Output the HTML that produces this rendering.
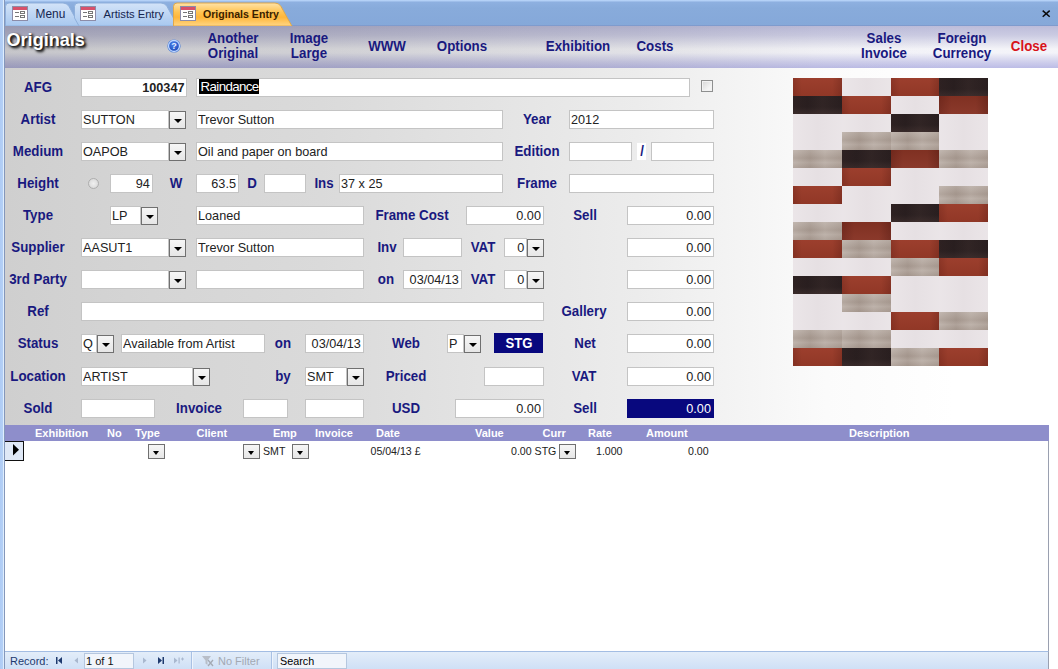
<!DOCTYPE html><html><head><meta charset="utf-8"><title>Originals Entry</title><style>
*{box-sizing:border-box;margin:0;padding:0}
html,body{width:1058px;height:669px;overflow:hidden;background:#fff}
body{position:relative;font-family:"Liberation Sans",sans-serif;font-size:12px;color:#1e1e1e}
.a{position:absolute}
.f{position:absolute;background:#fff;border:1px solid #c4c4c4;height:19px;line-height:17px;font-size:13.33px;padding:0 2px 0 1px;white-space:nowrap;overflow:hidden;color:#222}
.r{text-align:right}
.t{display:inline-block;transform:scaleX(.95);transform-origin:0 50%}
.r .t{transform-origin:100% 50%}
.l{position:absolute;font-weight:bold;font-size:14.5px;transform:scaleX(.918);color:#19197f;white-space:nowrap;text-align:center;line-height:16px}
.h{position:absolute;font-weight:bold;font-size:14.5px;transform:scaleX(.918);color:#19197f;white-space:nowrap;text-align:center;line-height:15.700px}
.b{position:absolute;width:17px;height:18px;border:1px solid #707070;background:linear-gradient(#f6f6f6,#e6e6e6)}
.b:after{content:"";position:absolute;left:3.500px;top:6.500px;border-left:4px solid transparent;border-right:4px solid transparent;border-top:4px solid #000}
.sh{position:absolute;font-weight:bold;font-size:11px;color:#fff;white-space:nowrap;line-height:14px;top:425.500px}
.st{position:absolute;font-size:10.600px;color:#222;white-space:nowrap;line-height:14px;top:443.500px}
.sb{position:absolute;width:17px;height:15px;border:1px solid #707070;background:linear-gradient(#f6f6f6,#e6e6e6)}
.sb:after{content:"";position:absolute;left:4px;top:6px;border-left:3.5px solid transparent;border-right:3.5px solid transparent;border-top:4px solid #000}
.n{position:absolute;font-size:11px;color:#1e3a6e;white-space:nowrap;line-height:14px;top:654px}
</style></head><body>
<div class="a" style="left:0;top:0;width:1058px;height:26px;background:linear-gradient(#b9d5f9 0,#b0cdf4 1px,#8eb0e0 2px,#88abdb 8px,#85a8d9 100%)"></div>
<div class="a" style="left:0;top:25px;width:1058px;height:1px;background:#7f9bcd"></div>
<div class="a" style="left:0;top:0;width:5px;height:669px;background:linear-gradient(to right,#aecbf5 0,#b4d0f6 2.700px,#dfeefe 3px,#dfeefe 4px,#8497bb 4px)"></div>
<div class="a" style="left:5px;top:26px;width:1053px;height:626px;background:linear-gradient(to right,#cfcfcf 0,#d5d5d5 14%,#dadada 30%,#ececec 60%,#fbfbfb 78%,#fff 90%)"></div>
<div class="a" style="left:5px;top:26px;width:1053px;height:42px;background:linear-gradient(#bcbcda 0,#cbcbe2 22%,#f4f4f8 55%,#f3f3f9 64%,#d0d0ec 85%,#bcbce6 100%),linear-gradient(to right,#cfcfcf 0,#d5d5d5 14%,#dadada 30%,#ececec 60%,#fbfbfb 78%,#fff 90%);background-blend-mode:multiply"></div>
<svg class="a" style="left:0;top:0" width="320" height="26" viewBox="0 0 320 26">
<defs>
<linearGradient id="ti" x1="0" y1="0" x2="0" y2="1"><stop offset="0" stop-color="#d3e3f8"/><stop offset="1" stop-color="#a8c8ef"/></linearGradient>
<linearGradient id="ta" x1="0" y1="0" x2="0" y2="1"><stop offset="0" stop-color="#ffe3a8"/><stop offset=".4" stop-color="#ffc352"/><stop offset=".62" stop-color="#ffb63a"/><stop offset="1" stop-color="#ffd685"/></linearGradient>
</defs>
<path d="M5.5 26 V6.500 Q5.5 3 9 3 H63 Q67 3 69 6.500 L79 24.5 L80 26 Z" fill="url(#ti)" stroke="#8fb0dc" stroke-width="1"/>
<path d="M74.500 18 V6.500 Q74.500 3 78 3 H161 Q165 3 167 6.500 L177 24.500 L178 26 H79 Z" fill="url(#ti)" stroke="#8fb0dc" stroke-width="1"/>
<path d="M173.500 26 V6.500 Q173.500 3 177 3 H275 Q279 3 281 6.500 L291 24.500 L292 26 Z" fill="url(#ta)" stroke="#e0a84a" stroke-width="1"/>
</svg>
<svg class="a" style="left:12px;top:6px" width="16" height="15" viewBox="0 0 16 15"><rect x=".5" y=".5" width="15" height="14" fill="#fff" stroke="#8c8ca8"/><rect x="1" y="1" width="14" height="3" fill="#d8506a"/><rect x="3" y="6" width="4" height="1" fill="#777"/><rect x="3" y="10" width="4" height="1" fill="#777"/><rect x="8.500" y="5.500" width="4" height="2" fill="none" stroke="#777" stroke-width="1"/><rect x="8.500" y="9.500" width="4" height="2" fill="none" stroke="#777" stroke-width="1"/></svg>
<svg class="a" style="left:80px;top:6px" width="16" height="15" viewBox="0 0 16 15"><rect x=".5" y=".5" width="15" height="14" fill="#fff" stroke="#8c8ca8"/><rect x="1" y="1" width="14" height="3" fill="#d8506a"/><rect x="3" y="6" width="4" height="1" fill="#777"/><rect x="3" y="10" width="4" height="1" fill="#777"/><rect x="8.500" y="5.500" width="4" height="2" fill="none" stroke="#777" stroke-width="1"/><rect x="8.500" y="9.500" width="4" height="2" fill="none" stroke="#777" stroke-width="1"/></svg>
<svg class="a" style="left:179.5px;top:6px" width="16" height="15" viewBox="0 0 16 15"><rect x=".5" y=".5" width="15" height="14" fill="#fff" stroke="#8c8ca8"/><rect x="1" y="1" width="14" height="3" fill="#d8506a"/><rect x="3" y="6" width="4" height="1" fill="#777"/><rect x="3" y="10" width="4" height="1" fill="#777"/><rect x="8.500" y="5.500" width="4" height="2" fill="none" stroke="#777" stroke-width="1"/><rect x="8.500" y="9.500" width="4" height="2" fill="none" stroke="#777" stroke-width="1"/></svg>
<div class="a" style="left:35.500px;top:6.500px;font-size:11.900px;line-height:14px;color:#15254f">Menu</div>
<div class="a" style="left:103.500px;top:6.500px;font-size:11.200px;line-height:14px;color:#15254f">Artists Entry</div>
<div class="a" style="left:203px;top:6.500px;font-size:10.600px;line-height:14px;color:#3a1e00;font-weight:bold">Originals Entry</div>
<svg class="a" style="left:1042px;top:10px" width="9" height="8" viewBox="0 0 9 8"><path d="M.7 .6 L7.700 6.800 M7.700 .6 L.7 6.800" stroke="#0a0a0a" stroke-width="1.500"/></svg>
<div class="a" style="left:6.500px;top:28.500px;font-size:18.100px;font-weight:bold;color:#fff;line-height:22px;text-shadow:2px 2px 3px #000,1px 1px 2px #333">Originals</div>
<svg class="a" style="left:167px;top:39px" width="14" height="14" viewBox="0 0 14 14"><defs><radialGradient id="hg" cx=".45" cy=".35" r=".75"><stop offset="0" stop-color="#4a84ee"/><stop offset="1" stop-color="#153fae"/></radialGradient></defs><circle cx="7" cy="7" r="6.600" fill="#4f7fd6"/><circle cx="7" cy="7" r="5.500" fill="url(#hg)" stroke="#bcd6ff" stroke-width="1.300"/><text x="7" y="10.200" font-family="Liberation Sans" font-weight="bold" font-size="9" fill="#e6efff" text-anchor="middle">?</text></svg>
<div class="h" style="left:172.5px;width:120px;top:30.6px;color:#19197f">Another<br>Original</div>
<div class="h" style="left:248.5px;width:120px;top:30.6px;color:#19197f">Image<br>Large</div>
<div class="h" style="left:326.7px;width:120px;top:38.7px;color:#19197f">WWW</div>
<div class="h" style="left:402.3px;width:120px;top:38.7px;color:#19197f">Options</div>
<div class="h" style="left:517.7px;width:120px;top:38.7px;color:#19197f">Exhibition</div>
<div class="h" style="left:595.3px;width:120px;top:38.7px;color:#19197f">Costs</div>
<div class="h" style="left:824px;width:120px;top:30.6px;color:#19197f">Sales<br>Invoice</div>
<div class="h" style="left:901.5px;width:120px;top:30.6px;color:#19197f">Foreign<br>Currency</div>
<div class="h" style="left:969.3px;width:120px;top:38.7px;color:#d8121a">Close</div>
<div class="l" style="left:-12.200000000000003px;width:100px;top:78.7px">AFG</div>
<div class="l" style="left:-12.200000000000003px;width:100px;top:110.7px">Artist</div>
<div class="l" style="left:-12.200000000000003px;width:100px;top:142.7px">Medium</div>
<div class="l" style="left:-12.200000000000003px;width:100px;top:174.7px">Height</div>
<div class="l" style="left:-12.200000000000003px;width:100px;top:206.7px">Type</div>
<div class="l" style="left:-12.200000000000003px;width:100px;top:238.7px">Supplier</div>
<div class="l" style="left:-12.200000000000003px;width:100px;top:270.7px">3rd Party</div>
<div class="l" style="left:-12.200000000000003px;width:100px;top:302.7px">Ref</div>
<div class="l" style="left:-12.200000000000003px;width:100px;top:334.7px">Status</div>
<div class="l" style="left:-12.200000000000003px;width:100px;top:367.7px">Location</div>
<div class="l" style="left:-12.200000000000003px;width:100px;top:399.7px">Sold</div>
<div class="f r" style="left:81px;width:106px;top:78px"><span class="t"><b>100347</b></span></div>
<div class="f " style="left:196px;width:494px;top:78px"><span style="background:#000;color:#fff;display:inline-block;height:15px;line-height:16px;margin-top:0;padding:0 0 0 1.500px;margin-left:1px;font-size:13.330px;vertical-align:top;letter-spacing:-.62px">Raindance</span></div>
<div class="a" style="left:701px;top:80px;width:12px;height:12px;border:1px solid #8e8f8f;background:linear-gradient(135deg,#d6d6d6,#f4f4f4 70%);box-shadow:inset 0 0 0 1px #f2f2f2"></div>
<div class="f " style="left:81px;width:88px;top:110px"><span class="t">SUTTON</span></div>
<div class="b" style="left:169px;top:111px"></div>
<div class="f " style="left:196px;width:307px;top:110px"><span class="t">Trevor Sutton</span></div>
<div class="l" style="left:486.5px;width:100px;top:110.7px">Year</div>
<div class="f " style="left:569px;width:145px;top:110px"><span class="t">2012</span></div>
<div class="f " style="left:81px;width:88px;top:142px"><span class="t">OAPOB</span></div>
<div class="b" style="left:169px;top:143px"></div>
<div class="f " style="left:196px;width:307px;top:142px"><span class="t">Oil and paper on board</span></div>
<div class="l" style="left:486.5px;width:100px;top:142.7px">Edition</div>
<div class="f " style="left:569px;width:63px;top:142px"></div>
<div class="a" style="left:637px;top:143px;width:9px;height:17px;background:#fff"></div>
<div class="l" style="left:591.7px;width:100px;top:142.7px">/</div>
<div class="f " style="left:651px;width:63px;top:142px"></div>
<div class="a" style="left:88px;top:178px;width:11px;height:11px;border-radius:50%;border:1px solid #aeaeae;background:radial-gradient(#f0f0f0,#d4d4d4)"></div>
<div class="f r" style="left:110px;width:43px;top:174px"><span class="t">94</span></div>
<div class="l" style="left:126px;width:100px;top:174.7px">W</div>
<div class="f r" style="left:196px;width:43px;top:174px"><span class="t">63.5</span></div>
<div class="l" style="left:201.5px;width:100px;top:174.7px">D</div>
<div class="f " style="left:264px;width:42px;top:174px"></div>
<div class="l" style="left:273.5px;width:100px;top:174.7px">Ins</div>
<div class="f " style="left:339px;width:164px;top:174px"><span class="t">37 x 25</span></div>
<div class="l" style="left:486.5px;width:100px;top:174.7px">Frame</div>
<div class="f " style="left:569px;width:145px;top:174px"></div>
<div class="f " style="left:110px;width:31px;top:206px"><span class="t">LP</span></div>
<div class="b" style="left:141px;top:207px"></div>
<div class="f " style="left:196px;width:168px;top:206px"><span class="t">Loaned</span></div>
<div class="l" style="left:362px;width:100px;top:206.7px">Frame Cost</div>
<div class="f r" style="left:466px;width:78px;top:206px"><span class="t">0.00</span></div>
<div class="l" style="left:535.3px;width:100px;top:206.7px">Sell</div>
<div class="f r" style="left:627px;width:87px;top:206px"><span class="t">0.00</span></div>
<div class="f " style="left:81px;width:88px;top:238px"><span class="t">AASUT1</span></div>
<div class="b" style="left:169px;top:239px"></div>
<div class="f " style="left:196px;width:168px;top:238px"><span class="t">Trevor Sutton</span></div>
<div class="l" style="left:337px;width:100px;top:238.7px">Inv</div>
<div class="f " style="left:403px;width:59px;top:238px"></div>
<div class="l" style="left:432.7px;width:100px;top:238.7px">VAT</div>
<div class="f r" style="left:504px;width:23px;top:238px"><span class="t">0</span></div>
<div class="b" style="left:527px;top:239px"></div>
<div class="f r" style="left:627px;width:87px;top:238px"><span class="t">0.00</span></div>
<div class="f " style="left:81px;width:88px;top:270px"></div>
<div class="b" style="left:169px;top:271px"></div>
<div class="f " style="left:196px;width:168px;top:270px"></div>
<div class="l" style="left:336px;width:100px;top:270.7px">on</div>
<div class="f r" style="left:403px;width:59px;top:270px"><span class="t">03/04/13</span></div>
<div class="l" style="left:432.7px;width:100px;top:270.7px">VAT</div>
<div class="f r" style="left:504px;width:23px;top:270px"><span class="t">0</span></div>
<div class="b" style="left:527px;top:271px"></div>
<div class="f r" style="left:627px;width:87px;top:270px"><span class="t">0.00</span></div>
<div class="f " style="left:81px;width:463px;top:302px"></div>
<div class="l" style="left:533.7px;width:100px;top:302.7px">Gallery</div>
<div class="f r" style="left:627px;width:87px;top:302px"><span class="t">0.00</span></div>
<div class="f " style="left:81px;width:16px;top:334px"><span class="t">Q</span></div>
<div class="b" style="left:97px;top:335px"></div>
<div class="f " style="left:121px;width:144px;top:334px"><span class="t">Available from Artist</span></div>
<div class="l" style="left:233px;width:100px;top:334.7px">on</div>
<div class="f r" style="left:305px;width:59px;top:334px"><span class="t">03/04/13</span></div>
<div class="l" style="left:355.5px;width:100px;top:334.7px">Web</div>
<div class="f " style="left:447px;width:17px;top:334px"><span class="t">P</span></div>
<div class="b" style="left:464px;top:335px"></div>
<div class="a" style="left:494px;top:333px;width:49px;height:20px;background:#08087e;color:#fff;font-weight:bold;font-size:14.500px;line-height:20px;text-align:center"><span style="display:inline-block;transform:scaleX(.905)">STG</span></div>
<div class="l" style="left:534.7px;width:100px;top:334.7px">Net</div>
<div class="f r" style="left:627px;width:87px;top:334px"><span class="t">0.00</span></div>
<div class="f " style="left:81px;width:112px;top:367px"><span class="t">ARTIST</span></div>
<div class="b" style="left:193px;top:368px"></div>
<div class="l" style="left:233px;width:100px;top:367.7px">by</div>
<div class="f " style="left:305px;width:42px;top:367px"><span class="t">SMT</span></div>
<div class="b" style="left:347px;top:368px"></div>
<div class="l" style="left:355.5px;width:100px;top:367.7px">Priced</div>
<div class="f " style="left:484px;width:60px;top:367px"></div>
<div class="l" style="left:533.7px;width:100px;top:367.7px">VAT</div>
<div class="f r" style="left:627px;width:87px;top:367px"><span class="t">0.00</span></div>
<div class="f " style="left:81px;width:74px;top:399px"></div>
<div class="l" style="left:149.4px;width:100px;top:399.7px">Invoice</div>
<div class="f " style="left:243px;width:45px;top:399px"></div>
<div class="f " style="left:305px;width:59px;top:399px"></div>
<div class="l" style="left:355.8px;width:100px;top:399.7px">USD</div>
<div class="f r" style="left:455px;width:89px;top:399px"><span class="t">0.00</span></div>
<div class="l" style="left:535.3px;width:100px;top:399.7px">Sell</div>
<div class="f r" style="left:627px;width:87px;top:399px;background:#08087e;color:#fff;border-color:#08087e"><span class="t">0.00</span></div>
<div class="a" style="left:793px;top:78px;width:49px;height:18px;background:linear-gradient(to right,rgba(40,0,0,.14),rgba(0,0,0,0) 18%,rgba(0,0,0,0) 80%,rgba(30,0,0,.16)),linear-gradient(rgba(255,255,255,.02),rgba(0,0,0,.06)),#9a3b29"></div>
<div class="a" style="left:842px;top:78px;width:49px;height:18px;background:linear-gradient(to right,rgba(255,255,255,.12),rgba(200,190,195,.06) 50%,rgba(255,255,255,.1)),#e8e2e5"></div>
<div class="a" style="left:891px;top:78px;width:48px;height:18px;background:linear-gradient(to right,rgba(40,0,0,.14),rgba(0,0,0,0) 18%,rgba(0,0,0,0) 80%,rgba(30,0,0,.16)),linear-gradient(rgba(255,255,255,.02),rgba(0,0,0,.06)),#9a3b29"></div>
<div class="a" style="left:939px;top:78px;width:49px;height:18px;background:linear-gradient(to right,rgba(90,60,55,.1),rgba(0,0,0,0) 30%,rgba(90,70,65,.16) 60%,rgba(0,0,0,0)),linear-gradient(rgba(0,0,0,.08) 60%,rgba(120,90,80,.14)),#2c2122"></div>
<div class="a" style="left:793px;top:96px;width:49px;height:18px;background:linear-gradient(to right,rgba(90,60,55,.1),rgba(0,0,0,0) 30%,rgba(90,70,65,.16) 60%,rgba(0,0,0,0)),linear-gradient(rgba(0,0,0,.08) 60%,rgba(120,90,80,.14)),#2c2122"></div>
<div class="a" style="left:842px;top:96px;width:49px;height:18px;background:linear-gradient(to right,rgba(40,0,0,.14),rgba(0,0,0,0) 18%,rgba(0,0,0,0) 80%,rgba(30,0,0,.16)),linear-gradient(rgba(255,255,255,.02),rgba(0,0,0,.06)),#9a3b29"></div>
<div class="a" style="left:891px;top:96px;width:48px;height:18px;background:linear-gradient(to right,rgba(255,255,255,.12),rgba(200,190,195,.06) 50%,rgba(255,255,255,.1)),#e8e2e5"></div>
<div class="a" style="left:939px;top:96px;width:49px;height:18px;background:linear-gradient(to right,rgba(40,0,0,.18),rgba(0,0,0,0) 25%,rgba(0,0,0,0) 75%,rgba(30,0,0,.2)),linear-gradient(rgba(0,0,0,.06),rgba(255,255,255,.03)),#873324"></div>
<div class="a" style="left:793px;top:114px;width:49px;height:18px;background:linear-gradient(to right,rgba(255,255,255,.12),rgba(200,190,195,.06) 50%,rgba(255,255,255,.1)),#e8e2e5"></div>
<div class="a" style="left:842px;top:114px;width:49px;height:18px;background:linear-gradient(to right,rgba(255,255,255,.12),rgba(200,190,195,.06) 50%,rgba(255,255,255,.1)),#e8e2e5"></div>
<div class="a" style="left:891px;top:114px;width:48px;height:18px;background:linear-gradient(to right,rgba(90,60,55,.1),rgba(0,0,0,0) 30%,rgba(90,70,65,.16) 60%,rgba(0,0,0,0)),linear-gradient(rgba(0,0,0,.08) 60%,rgba(120,90,80,.14)),#2c2122"></div>
<div class="a" style="left:939px;top:114px;width:49px;height:18px;background:linear-gradient(to right,rgba(255,255,255,.12),rgba(200,190,195,.06) 50%,rgba(255,255,255,.1)),#e8e2e5"></div>
<div class="a" style="left:793px;top:132px;width:49px;height:18px;background:linear-gradient(to right,rgba(255,255,255,.12),rgba(200,190,195,.06) 50%,rgba(255,255,255,.1)),#e8e2e5"></div>
<div class="a" style="left:842px;top:132px;width:49px;height:18px;background:linear-gradient(rgba(255,255,255,.1),rgba(70,50,40,.07) 45%,rgba(255,255,255,.06) 70%,rgba(70,50,40,.08)),linear-gradient(to right,rgba(255,255,255,.1),rgba(80,60,50,.1) 35%,rgba(255,255,255,.08) 65%,rgba(80,60,50,.08)),#b4a79e"></div>
<div class="a" style="left:891px;top:132px;width:48px;height:18px;background:linear-gradient(rgba(255,255,255,.1),rgba(70,50,40,.07) 45%,rgba(255,255,255,.06) 70%,rgba(70,50,40,.08)),linear-gradient(to right,rgba(255,255,255,.1),rgba(80,60,50,.1) 35%,rgba(255,255,255,.08) 65%,rgba(80,60,50,.08)),#b4a79e"></div>
<div class="a" style="left:939px;top:132px;width:49px;height:18px;background:linear-gradient(to right,rgba(255,255,255,.12),rgba(200,190,195,.06) 50%,rgba(255,255,255,.1)),#e8e2e5"></div>
<div class="a" style="left:793px;top:150px;width:49px;height:18px;background:linear-gradient(rgba(255,255,255,.1),rgba(70,50,40,.07) 45%,rgba(255,255,255,.06) 70%,rgba(70,50,40,.08)),linear-gradient(to right,rgba(255,255,255,.1),rgba(80,60,50,.1) 35%,rgba(255,255,255,.08) 65%,rgba(80,60,50,.08)),#b4a79e"></div>
<div class="a" style="left:842px;top:150px;width:49px;height:18px;background:linear-gradient(to right,rgba(90,60,55,.1),rgba(0,0,0,0) 30%,rgba(90,70,65,.16) 60%,rgba(0,0,0,0)),linear-gradient(rgba(0,0,0,.08) 60%,rgba(120,90,80,.14)),#2c2122"></div>
<div class="a" style="left:891px;top:150px;width:48px;height:18px;background:linear-gradient(to right,rgba(40,0,0,.18),rgba(0,0,0,0) 25%,rgba(0,0,0,0) 75%,rgba(30,0,0,.2)),linear-gradient(rgba(0,0,0,.06),rgba(255,255,255,.03)),#873324"></div>
<div class="a" style="left:939px;top:150px;width:49px;height:18px;background:linear-gradient(rgba(255,255,255,.1),rgba(70,50,40,.07) 45%,rgba(255,255,255,.06) 70%,rgba(70,50,40,.08)),linear-gradient(to right,rgba(255,255,255,.1),rgba(80,60,50,.1) 35%,rgba(255,255,255,.08) 65%,rgba(80,60,50,.08)),#b4a79e"></div>
<div class="a" style="left:793px;top:168px;width:49px;height:18px;background:linear-gradient(to right,rgba(255,255,255,.12),rgba(200,190,195,.06) 50%,rgba(255,255,255,.1)),#e8e2e5"></div>
<div class="a" style="left:842px;top:168px;width:49px;height:18px;background:linear-gradient(to right,rgba(40,0,0,.14),rgba(0,0,0,0) 18%,rgba(0,0,0,0) 80%,rgba(30,0,0,.16)),linear-gradient(rgba(255,255,255,.02),rgba(0,0,0,.06)),#9a3b29"></div>
<div class="a" style="left:891px;top:168px;width:48px;height:18px;background:linear-gradient(to right,rgba(255,255,255,.12),rgba(200,190,195,.06) 50%,rgba(255,255,255,.1)),#e8e2e5"></div>
<div class="a" style="left:939px;top:168px;width:49px;height:18px;background:linear-gradient(to right,rgba(255,255,255,.12),rgba(200,190,195,.06) 50%,rgba(255,255,255,.1)),#e8e2e5"></div>
<div class="a" style="left:793px;top:186px;width:49px;height:18px;background:linear-gradient(to right,rgba(40,0,0,.14),rgba(0,0,0,0) 18%,rgba(0,0,0,0) 80%,rgba(30,0,0,.16)),linear-gradient(rgba(255,255,255,.02),rgba(0,0,0,.06)),#9a3b29"></div>
<div class="a" style="left:842px;top:186px;width:49px;height:18px;background:linear-gradient(to right,rgba(255,255,255,.12),rgba(200,190,195,.06) 50%,rgba(255,255,255,.1)),#e8e2e5"></div>
<div class="a" style="left:891px;top:186px;width:48px;height:18px;background:linear-gradient(to right,rgba(255,255,255,.12),rgba(200,190,195,.06) 50%,rgba(255,255,255,.1)),#e8e2e5"></div>
<div class="a" style="left:939px;top:186px;width:49px;height:18px;background:linear-gradient(rgba(255,255,255,.1),rgba(70,50,40,.07) 45%,rgba(255,255,255,.06) 70%,rgba(70,50,40,.08)),linear-gradient(to right,rgba(255,255,255,.1),rgba(80,60,50,.1) 35%,rgba(255,255,255,.08) 65%,rgba(80,60,50,.08)),#b4a79e"></div>
<div class="a" style="left:793px;top:204px;width:49px;height:18px;background:linear-gradient(to right,rgba(255,255,255,.12),rgba(200,190,195,.06) 50%,rgba(255,255,255,.1)),#e8e2e5"></div>
<div class="a" style="left:842px;top:204px;width:49px;height:18px;background:linear-gradient(to right,rgba(255,255,255,.12),rgba(200,190,195,.06) 50%,rgba(255,255,255,.1)),#e8e2e5"></div>
<div class="a" style="left:891px;top:204px;width:48px;height:18px;background:linear-gradient(to right,rgba(90,60,55,.1),rgba(0,0,0,0) 30%,rgba(90,70,65,.16) 60%,rgba(0,0,0,0)),linear-gradient(rgba(0,0,0,.08) 60%,rgba(120,90,80,.14)),#2c2122"></div>
<div class="a" style="left:939px;top:204px;width:49px;height:18px;background:linear-gradient(to right,rgba(40,0,0,.14),rgba(0,0,0,0) 18%,rgba(0,0,0,0) 80%,rgba(30,0,0,.16)),linear-gradient(rgba(255,255,255,.02),rgba(0,0,0,.06)),#9a3b29"></div>
<div class="a" style="left:793px;top:222px;width:49px;height:18px;background:linear-gradient(rgba(255,255,255,.1),rgba(70,50,40,.07) 45%,rgba(255,255,255,.06) 70%,rgba(70,50,40,.08)),linear-gradient(to right,rgba(255,255,255,.1),rgba(80,60,50,.1) 35%,rgba(255,255,255,.08) 65%,rgba(80,60,50,.08)),#b4a79e"></div>
<div class="a" style="left:842px;top:222px;width:49px;height:18px;background:linear-gradient(to right,rgba(40,0,0,.18),rgba(0,0,0,0) 25%,rgba(0,0,0,0) 75%,rgba(30,0,0,.2)),linear-gradient(rgba(0,0,0,.06),rgba(255,255,255,.03)),#873324"></div>
<div class="a" style="left:891px;top:222px;width:48px;height:18px;background:linear-gradient(to right,rgba(255,255,255,.12),rgba(200,190,195,.06) 50%,rgba(255,255,255,.1)),#e8e2e5"></div>
<div class="a" style="left:939px;top:222px;width:49px;height:18px;background:linear-gradient(to right,rgba(255,255,255,.12),rgba(200,190,195,.06) 50%,rgba(255,255,255,.1)),#e8e2e5"></div>
<div class="a" style="left:793px;top:240px;width:49px;height:18px;background:linear-gradient(to right,rgba(40,0,0,.14),rgba(0,0,0,0) 18%,rgba(0,0,0,0) 80%,rgba(30,0,0,.16)),linear-gradient(rgba(255,255,255,.02),rgba(0,0,0,.06)),#9a3b29"></div>
<div class="a" style="left:842px;top:240px;width:49px;height:18px;background:linear-gradient(rgba(255,255,255,.1),rgba(70,50,40,.07) 45%,rgba(255,255,255,.06) 70%,rgba(70,50,40,.08)),linear-gradient(to right,rgba(255,255,255,.1),rgba(80,60,50,.1) 35%,rgba(255,255,255,.08) 65%,rgba(80,60,50,.08)),#b4a79e"></div>
<div class="a" style="left:891px;top:240px;width:48px;height:18px;background:linear-gradient(to right,rgba(40,0,0,.14),rgba(0,0,0,0) 18%,rgba(0,0,0,0) 80%,rgba(30,0,0,.16)),linear-gradient(rgba(255,255,255,.02),rgba(0,0,0,.06)),#9a3b29"></div>
<div class="a" style="left:939px;top:240px;width:49px;height:18px;background:linear-gradient(to right,rgba(90,60,55,.1),rgba(0,0,0,0) 30%,rgba(90,70,65,.16) 60%,rgba(0,0,0,0)),linear-gradient(rgba(0,0,0,.08) 60%,rgba(120,90,80,.14)),#2c2122"></div>
<div class="a" style="left:793px;top:258px;width:49px;height:18px;background:linear-gradient(to right,rgba(255,255,255,.12),rgba(200,190,195,.06) 50%,rgba(255,255,255,.1)),#e8e2e5"></div>
<div class="a" style="left:842px;top:258px;width:49px;height:18px;background:linear-gradient(to right,rgba(255,255,255,.12),rgba(200,190,195,.06) 50%,rgba(255,255,255,.1)),#e8e2e5"></div>
<div class="a" style="left:891px;top:258px;width:48px;height:18px;background:linear-gradient(rgba(255,255,255,.1),rgba(70,50,40,.07) 45%,rgba(255,255,255,.06) 70%,rgba(70,50,40,.08)),linear-gradient(to right,rgba(255,255,255,.1),rgba(80,60,50,.1) 35%,rgba(255,255,255,.08) 65%,rgba(80,60,50,.08)),#b4a79e"></div>
<div class="a" style="left:939px;top:258px;width:49px;height:18px;background:linear-gradient(to right,rgba(40,0,0,.14),rgba(0,0,0,0) 18%,rgba(0,0,0,0) 80%,rgba(30,0,0,.16)),linear-gradient(rgba(255,255,255,.02),rgba(0,0,0,.06)),#9a3b29"></div>
<div class="a" style="left:793px;top:276px;width:49px;height:18px;background:linear-gradient(to right,rgba(90,60,55,.1),rgba(0,0,0,0) 30%,rgba(90,70,65,.16) 60%,rgba(0,0,0,0)),linear-gradient(rgba(0,0,0,.08) 60%,rgba(120,90,80,.14)),#2c2122"></div>
<div class="a" style="left:842px;top:276px;width:49px;height:18px;background:linear-gradient(to right,rgba(40,0,0,.14),rgba(0,0,0,0) 18%,rgba(0,0,0,0) 80%,rgba(30,0,0,.16)),linear-gradient(rgba(255,255,255,.02),rgba(0,0,0,.06)),#9a3b29"></div>
<div class="a" style="left:891px;top:276px;width:48px;height:18px;background:linear-gradient(to right,rgba(255,255,255,.12),rgba(200,190,195,.06) 50%,rgba(255,255,255,.1)),#e8e2e5"></div>
<div class="a" style="left:939px;top:276px;width:49px;height:18px;background:linear-gradient(to right,rgba(255,255,255,.12),rgba(200,190,195,.06) 50%,rgba(255,255,255,.1)),#e8e2e5"></div>
<div class="a" style="left:793px;top:294px;width:49px;height:18px;background:linear-gradient(to right,rgba(255,255,255,.12),rgba(200,190,195,.06) 50%,rgba(255,255,255,.1)),#e8e2e5"></div>
<div class="a" style="left:842px;top:294px;width:49px;height:18px;background:linear-gradient(rgba(255,255,255,.1),rgba(70,50,40,.07) 45%,rgba(255,255,255,.06) 70%,rgba(70,50,40,.08)),linear-gradient(to right,rgba(255,255,255,.1),rgba(80,60,50,.1) 35%,rgba(255,255,255,.08) 65%,rgba(80,60,50,.08)),#b4a79e"></div>
<div class="a" style="left:891px;top:294px;width:48px;height:18px;background:linear-gradient(to right,rgba(255,255,255,.12),rgba(200,190,195,.06) 50%,rgba(255,255,255,.1)),#e8e2e5"></div>
<div class="a" style="left:939px;top:294px;width:49px;height:18px;background:linear-gradient(to right,rgba(255,255,255,.12),rgba(200,190,195,.06) 50%,rgba(255,255,255,.1)),#e8e2e5"></div>
<div class="a" style="left:793px;top:312px;width:49px;height:18px;background:linear-gradient(to right,rgba(255,255,255,.12),rgba(200,190,195,.06) 50%,rgba(255,255,255,.1)),#e8e2e5"></div>
<div class="a" style="left:842px;top:312px;width:49px;height:18px;background:linear-gradient(to right,rgba(255,255,255,.12),rgba(200,190,195,.06) 50%,rgba(255,255,255,.1)),#e8e2e5"></div>
<div class="a" style="left:891px;top:312px;width:48px;height:18px;background:linear-gradient(to right,rgba(40,0,0,.14),rgba(0,0,0,0) 18%,rgba(0,0,0,0) 80%,rgba(30,0,0,.16)),linear-gradient(rgba(255,255,255,.02),rgba(0,0,0,.06)),#9a3b29"></div>
<div class="a" style="left:939px;top:312px;width:49px;height:18px;background:linear-gradient(rgba(255,255,255,.1),rgba(70,50,40,.07) 45%,rgba(255,255,255,.06) 70%,rgba(70,50,40,.08)),linear-gradient(to right,rgba(255,255,255,.1),rgba(80,60,50,.1) 35%,rgba(255,255,255,.08) 65%,rgba(80,60,50,.08)),#b4a79e"></div>
<div class="a" style="left:793px;top:330px;width:49px;height:18px;background:linear-gradient(rgba(255,255,255,.1),rgba(70,50,40,.07) 45%,rgba(255,255,255,.06) 70%,rgba(70,50,40,.08)),linear-gradient(to right,rgba(255,255,255,.1),rgba(80,60,50,.1) 35%,rgba(255,255,255,.08) 65%,rgba(80,60,50,.08)),#b4a79e"></div>
<div class="a" style="left:842px;top:330px;width:49px;height:18px;background:linear-gradient(rgba(255,255,255,.1),rgba(70,50,40,.07) 45%,rgba(255,255,255,.06) 70%,rgba(70,50,40,.08)),linear-gradient(to right,rgba(255,255,255,.1),rgba(80,60,50,.1) 35%,rgba(255,255,255,.08) 65%,rgba(80,60,50,.08)),#b4a79e"></div>
<div class="a" style="left:891px;top:330px;width:48px;height:18px;background:linear-gradient(to right,rgba(255,255,255,.12),rgba(200,190,195,.06) 50%,rgba(255,255,255,.1)),#e8e2e5"></div>
<div class="a" style="left:939px;top:330px;width:49px;height:18px;background:linear-gradient(to right,rgba(255,255,255,.12),rgba(200,190,195,.06) 50%,rgba(255,255,255,.1)),#e8e2e5"></div>
<div class="a" style="left:793px;top:348px;width:49px;height:18px;background:linear-gradient(to right,rgba(40,0,0,.14),rgba(0,0,0,0) 18%,rgba(0,0,0,0) 80%,rgba(30,0,0,.16)),linear-gradient(rgba(255,255,255,.02),rgba(0,0,0,.06)),#9a3b29"></div>
<div class="a" style="left:842px;top:348px;width:49px;height:18px;background:linear-gradient(to right,rgba(90,60,55,.1),rgba(0,0,0,0) 30%,rgba(90,70,65,.16) 60%,rgba(0,0,0,0)),linear-gradient(rgba(0,0,0,.08) 60%,rgba(120,90,80,.14)),#2c2122"></div>
<div class="a" style="left:891px;top:348px;width:48px;height:18px;background:linear-gradient(rgba(255,255,255,.1),rgba(70,50,40,.07) 45%,rgba(255,255,255,.06) 70%,rgba(70,50,40,.08)),linear-gradient(to right,rgba(255,255,255,.1),rgba(80,60,50,.1) 35%,rgba(255,255,255,.08) 65%,rgba(80,60,50,.08)),#b4a79e"></div>
<div class="a" style="left:939px;top:348px;width:49px;height:18px;background:linear-gradient(to right,rgba(40,0,0,.14),rgba(0,0,0,0) 18%,rgba(0,0,0,0) 80%,rgba(30,0,0,.16)),linear-gradient(rgba(255,255,255,.02),rgba(0,0,0,.06)),#9a3b29"></div>
<div class="a" style="left:5px;top:425px;width:1044px;height:227px;background:#fff;border-right:1px solid #9aa0b0"></div>
<div class="a" style="left:5px;top:425px;width:1044px;height:16px;background:#8e8ecb"></div>
<div class="sh" style="left:35px">Exhibition</div>
<div class="sh" style="left:107px">No</div>
<div class="sh" style="left:135px">Type</div>
<div class="sh" style="left:196.5px">Client</div>
<div class="sh" style="left:273px">Emp</div>
<div class="sh" style="left:315px">Invoice</div>
<div class="sh" style="left:376px">Date</div>
<div class="sh" style="left:475px">Value</div>
<div class="sh" style="left:542.5px">Curr</div>
<div class="sh" style="left:588px">Rate</div>
<div class="sh" style="left:646px">Amount</div>
<div class="sh" style="left:849px">Description</div>
<div class="a" style="left:5px;top:441px;width:19px;height:20px;background:#dfe8f6;border:1px solid #111;border-left:none"></div>
<svg class="a" style="left:5px;top:441px" width="19" height="20" viewBox="0 0 19 20"><path d="M8 3 V14.500 L14 8.750 Z" fill="#000"/></svg>
<div class="sb" style="left:148px;top:444px"></div>
<div class="sb" style="left:243px;top:444px"></div>
<div class="sb" style="left:292px;top:444px"></div>
<div class="sb" style="left:559px;top:444px"></div>
<div class="st" style="left:263px">SMT</div>
<div class="st" style="left:370.500px">05/04/13 £</div>
<div class="st" style="left:511px">0.00 STG</div>
<div class="st" style="left:596px">1.000</div>
<div class="st" style="left:688px">0.00</div>
<div class="a" style="left:5px;top:651px;width:1044px;height:18px;background:linear-gradient(#e3edf9,#cfe0f6);border-top:1px solid #a3bde3;border-right:1px solid #9aa0b0"></div>
<div class="n" style="left:10px">Record:</div>
<svg class="a" style="left:54px;top:656px" width="132" height="10" viewBox="0 0 132 10"><g fill="#1e3a6e"><rect x="2" y="1" width="1.500" height="7"/><path d="M8 1 V8 L4 4.500 Z"/><path d="M104 1 V8 L108 4.500 Z"/><rect x="108.500" y="1" width="1.500" height="7"/></g><g fill="#a9b8cf"><path d="M24 1.500 V7.500 L20.500 4.500 Z"/><path d="M89 1.500 V7.500 L92.500 4.500 Z"/><path d="M120 1.500 V7.500 L123.500 4.500 Z"/><rect x="124.500" y="1.500" width="1.200" height="6"/><path d="M127 3 l3 0 M128.500 1.500 l0 3" stroke="#a9b8cf" stroke-width="1"/></g></svg>
<div class="a" style="left:84px;top:653px;width:50px;height:16px;background:#f1f5fb;border:1px solid #b5c7df;font-size:11px;line-height:14px;padding-left:1px;color:#111">1 of 1</div>
<div class="a" style="left:191px;top:652px;width:2px;height:17px;background:linear-gradient(to right,#a9c1e4 50%,#eef4fc 50%)"></div>
<div class="n" style="left:218px;color:#a3a9b3">No Filter</div>
<svg class="a" style="left:201px;top:655px" width="14" height="12" viewBox="0 0 14 12"><path d="M1 1 H10 L6.500 5.500 V10 L4.500 8.500 V5.500 Z" fill="#b8bec8"/><path d="M7 5 L12 11 M12 5 L7 11" stroke="#a3a9b3" stroke-width="1.300"/></svg>
<div class="a" style="left:271px;top:652px;width:2px;height:17px;background:linear-gradient(to right,#a9c1e4 50%,#eef4fc 50%)"></div>
<div class="a" style="left:277px;top:653px;width:70px;height:16px;background:#f1f5fb;border:1px solid #b5c7df;font-size:10.800px;line-height:14px;padding-left:2px;color:#000">Search</div>
</body></html>
